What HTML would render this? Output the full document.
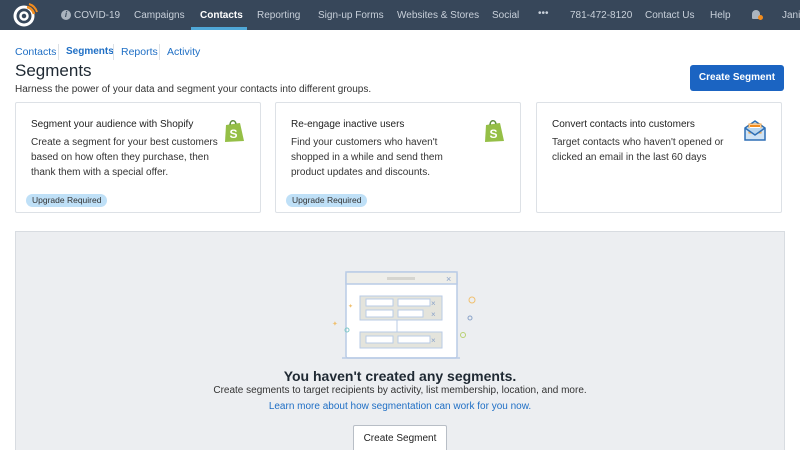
<!DOCTYPE html>
<html style="overflow:hidden;width:800px;height:450px"><head><meta charset="utf-8"><style>
*{box-sizing:border-box;margin:0;padding:0}
body{width:800px;height:450px;overflow:hidden;background:#fff;font-family:"Liberation Sans",sans-serif;color:#1f2933;position:relative}
.a{position:absolute;white-space:nowrap}
.nav{position:absolute;left:0;top:0;width:800px;height:30px;background:#37475a}
.nav .a{top:10px;font-size:10px;color:#c8d0da}
.card{position:absolute;top:102px;height:111px;border:1px solid #dde1e6;background:#fff;border-radius:2px}
.card h4{position:absolute;left:15px;top:16px;font-size:10px;font-weight:normal;color:#222}
.card p{position:absolute;left:15px;top:32px;font-size:10px;line-height:15px;color:#333;white-space:nowrap}
.badge{position:absolute;left:10px;top:91px;height:13px;padding:0 6px;border-radius:7px;background:#bfe0f7;font-size:8.5px;line-height:13px;color:#333}
.shop{position:absolute;top:16px;width:22px;height:24px}
</style></head><body>
<div class="nav">
<svg class="a" style="left:12px;top:3px" width="26" height="25" viewBox="0 0 26 25"><circle cx="12" cy="13" r="9" fill="none" stroke="#fff" stroke-width="3"/><circle cx="12" cy="13" r="3.5" fill="none" stroke="#fff" stroke-width="2.5"/><path d="M15 4 a9 9 0 0 1 7 7" stroke="#f28c1d" stroke-width="2.5" fill="none"/><path d="M17 1 a12 12 0 0 1 8 8" stroke="#f28c1d" stroke-width="2" fill="none"/></svg>
<div class="a" style="left:61px;top:10px;width:10px;height:10px;border-radius:50%;background:#aab4bf;color:#37475a;font-size:8px;text-align:center;line-height:10px;font-style:italic;font-weight:bold">i</div>
<div class="a" style="left:74px">COVID-19</div>
<div class="a" style="left:134px">Campaigns</div>
<div class="a" style="left:200px;color:#fff;font-weight:bold">Contacts</div>
<div class="a" style="left:191px;top:27px;width:56px;height:3px;background:#4fa8d8"></div>
<div class="a" style="left:257px">Reporting</div>
<div class="a" style="left:318px">Sign-up Forms</div>
<div class="a" style="left:397px">Websites &amp; Stores</div>
<div class="a" style="left:492px">Social</div>
<div class="a" style="left:538px;top:8px">•••</div>
<div class="a" style="left:570px">781-472-8120</div>
<div class="a" style="left:645px">Contact Us</div>
<div class="a" style="left:710px">Help</div>
<div class="a" style="left:752px;top:10px;width:8px;height:9px;background:#aab4bf;border-radius:4px 4px 1px 1px"></div>
<div class="a" style="left:758px;top:15px;width:5px;height:5px;background:#f28c1d;border-radius:50%"></div>
<div class="a" style="left:782px">Jani</div>
</div>
<div class="a" style="left:15px;top:46px;font-size:10.5px;color:#1f6fc5">Contacts</div>
<div class="a" style="left:58px;top:44px;width:1px;height:16px;background:#dde1e6"></div>
<div class="a" style="left:66px;top:46px;font-size:10px;color:#1f6fc5;font-weight:bold">Segments</div>
<div class="a" style="left:113px;top:44px;width:1px;height:16px;background:#dde1e6"></div>
<div class="a" style="left:121px;top:46px;font-size:10.5px;color:#1f6fc5">Reports</div>
<div class="a" style="left:159px;top:44px;width:1px;height:16px;background:#dde1e6"></div>
<div class="a" style="left:167px;top:46px;font-size:10.5px;color:#1f6fc5">Activity</div>
<div class="a" style="left:15px;top:61px;font-size:17px;color:#1f2933">Segments</div>
<div class="a" style="left:15px;top:84px;font-size:10px;color:#333">Harness the power of your data and segment your contacts into different groups.</div>
<div class="a" style="left:690px;top:65px;width:94px;height:26px;background:#1b64c2;border-radius:3px;color:#fff;font-size:10px;font-weight:bold;text-align:center;line-height:26px">Create Segment</div>

<div class="card" style="left:15px;width:246px">
<h4>Segment your audience with Shopify</h4>
<p>Create a segment for your best customers<br>based on how often they purchase, then<br>thank them with a special offer.</p>
<div class="badge">Upgrade Required</div>
<svg class="shop" style="left:207px" viewBox="0 0 22 24"><path d="M3 6 L17 4 L21 22 L2 23 Z" fill="#95bf47"/><path d="M7 6 C7 1 12 0 13 5" stroke="#5e8e3e" fill="none" stroke-width="1.5"/><text x="6.5" y="19" font-size="12" font-weight="bold" fill="#fff" font-family="Liberation Sans">S</text></svg>
</div>
<div class="card" style="left:275px;width:246px">
<h4>Re-engage inactive users</h4>
<p>Find your customers who haven't<br>shopped in a while and send them<br>product updates and discounts.</p>
<div class="badge">Upgrade Required</div>
<svg class="shop" style="left:207px" viewBox="0 0 22 24"><path d="M3 6 L17 4 L21 22 L2 23 Z" fill="#95bf47"/><path d="M7 6 C7 1 12 0 13 5" stroke="#5e8e3e" fill="none" stroke-width="1.5"/><text x="6.5" y="19" font-size="12" font-weight="bold" fill="#fff" font-family="Liberation Sans">S</text></svg>
</div>
<div class="card" style="left:536px;width:246px">
<h4>Convert contacts into customers</h4>
<p>Target contacts who haven't opened or<br>clicked an email in the last 60 days</p>
<svg style="position:absolute;left:206px;top:15px" width="24" height="24" viewBox="0 0 24 24"><path d="M2 10 L12 3 L22 10 L22 22 L2 22 Z" fill="#cfe3f5" stroke="#2e6fb5" stroke-width="1.5"/><rect x="6" y="6" width="12" height="9" fill="#fff" stroke="#f0a040"/><rect x="7" y="7" width="10" height="2" fill="#f28c1d"/><path d="M2 10 L12 17 L22 10" fill="#b8d6f0" stroke="#2e6fb5" stroke-width="1.5"/></svg>
</div>

<div class="a" style="left:15px;top:231px;width:770px;height:219px;background:#eceef1;border:1px solid #d8dce1;border-bottom:none"></div>
<svg class="a" style="left:315px;top:268px" width="170" height="95" viewBox="0 0 170 95">
<rect x="31" y="4" width="111" height="86" fill="#fff" stroke="#b9cbe6" stroke-width="1.5" rx="2"/>
<rect x="31" y="4" width="111" height="12" fill="#eeeeea" stroke="#b9cbe6" stroke-width="1.5"/>
<rect x="72" y="9" width="28" height="3" fill="#d5d5d0"/>
<text x="131" y="14" font-size="9" fill="#8aa3c9" font-family="Liberation Sans">×</text>
<rect x="45" y="28" width="82" height="24" fill="#e4e4dc" stroke="#b9cbe6"/>
<rect x="51" y="31" width="27" height="7" fill="#fff" stroke="#b9cbe6"/>
<rect x="83" y="31" width="32" height="7" fill="#fff" stroke="#b9cbe6"/>
<rect x="51" y="42" width="27" height="7" fill="#fff" stroke="#b9cbe6"/>
<rect x="83" y="42" width="25" height="7" fill="#fff" stroke="#b9cbe6"/>
<line x1="82" y1="52" x2="82" y2="64" stroke="#b9cbe6"/>
<rect x="45" y="64" width="82" height="16" fill="#e4e4dc" stroke="#b9cbe6"/>
<rect x="51" y="68" width="27" height="7" fill="#fff" stroke="#b9cbe6"/>
<rect x="83" y="68" width="32" height="7" fill="#fff" stroke="#b9cbe6"/>
<text x="116" y="38" font-size="8" fill="#8aa3c9">×</text><text x="116" y="49" font-size="8" fill="#8aa3c9">×</text><text x="116" y="75" font-size="8" fill="#8aa3c9">×</text>
<line x1="27" y1="90" x2="145" y2="90" stroke="#b9cbe6" stroke-width="1.5"/>
<text x="17" y="58" font-size="7" fill="#f0c070">✦</text><text x="33" y="40" font-size="6" fill="#f0c070">✦</text>
<circle cx="32" cy="62" r="2" fill="none" stroke="#7fc8c8"/><circle cx="157" cy="32" r="3" fill="none" stroke="#f0c070"/>
<circle cx="155" cy="50" r="2" fill="none" stroke="#8aa3c9"/><circle cx="148" cy="67" r="2.5" fill="none" stroke="#b8d070"/>
</svg>
<div class="a" style="left:0;width:800px;text-align:center;top:368px;font-size:14px;font-weight:bold;color:#1f2933">You haven't created any segments.</div>
<div class="a" style="left:0;width:800px;text-align:center;top:385px;font-size:10px;color:#333">Create segments to target recipients by activity, list membership, location, and more.</div>
<div class="a" style="left:0;width:800px;text-align:center;top:401px;font-size:10px;color:#1f6fc5">Learn more about how segmentation can work for you now.</div>
<div class="a" style="left:353px;top:425px;width:94px;height:30px;background:#fff;border:1px solid #b8bec6;border-radius:2px;font-size:10px;text-align:center;line-height:26px;color:#222">Create Segment</div>
</body></html>
